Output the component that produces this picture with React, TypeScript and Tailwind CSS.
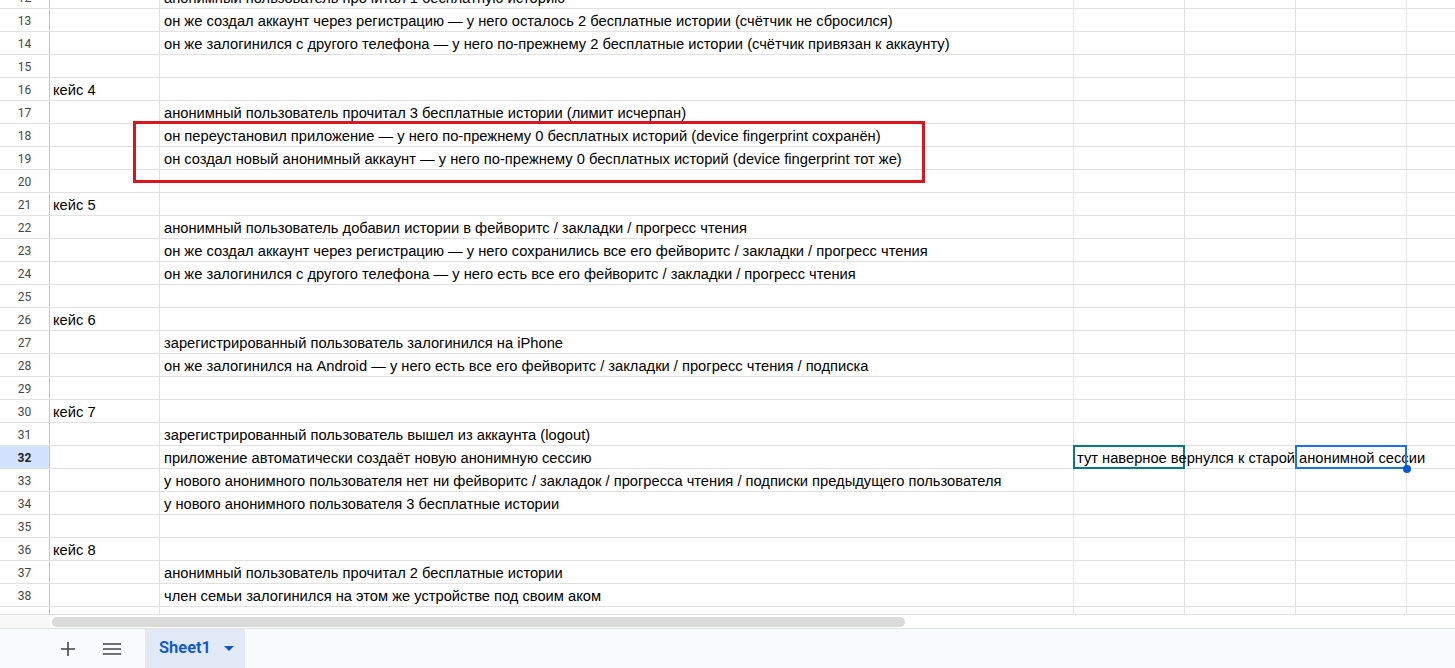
import React from "react";

type Row = { n: number; a?: string; b?: string; c?: string };

const rows: Row[] = [
  { n: 12, b: "анонимный пользователь прочитал 1 бесплатную историю" },
  { n: 13, b: "он же создал аккаунт через регистрацию — у него осталось 2 бесплатные истории (счётчик не сбросился)" },
  { n: 14, b: "он же залогинился с другого телефона — у него по-прежнему 2 бесплатные истории (счётчик привязан к аккаунту)" },
  { n: 15 },
  { n: 16, a: "кейс 4" },
  { n: 17, b: "анонимный пользователь прочитал 3 бесплатные истории (лимит исчерпан)" },
  { n: 18, b: "он переустановил приложение — у него по-прежнему 0 бесплатных историй (device fingerprint сохранён)" },
  { n: 19, b: "он создал новый анонимный аккаунт — у него по-прежнему 0 бесплатных историй (device fingerprint тот же)" },
  { n: 20 },
  { n: 21, a: "кейс 5" },
  { n: 22, b: "анонимный пользователь добавил истории в фейворитс / закладки / прогресс чтения" },
  { n: 23, b: "он же создал аккаунт через регистрацию — у него сохранились все его фейворитс / закладки / прогресс чтения" },
  { n: 24, b: "он же залогинился с другого телефона — у него есть все его фейворитс / закладки / прогресс чтения" },
  { n: 25 },
  { n: 26, a: "кейс 6" },
  { n: 27, b: "зарегистрированный пользователь залогинился на iPhone" },
  { n: 28, b: "он же залогинился на Android — у него есть все его фейворитс / закладки / прогресс чтения / подписка" },
  { n: 29 },
  { n: 30, a: "кейс 7" },
  { n: 31, b: "зарегистрированный пользователь вышел из аккаунта (logout)" },
  { n: 32, b: "приложение автоматически создаёт новую анонимную сессию", c: "тут наверное вернулся к старой анонимной сессии" },
  { n: 33, b: "у нового анонимного пользователя нет ни фейворитс / закладок / прогресса чтения / подписки предыдущего пользователя" },
  { n: 34, b: "у нового анонимного пользователя 3 бесплатные истории" },
  { n: 35 },
  { n: 36, a: "кейс 8" },
  { n: 37, b: "анонимный пользователь прочитал 2 бесплатные истории" },
  { n: 38, b: "член семьи залогинился на этом же устройстве под своим аком" },
  { n: 39, b: "у него по-прежнему 1 Бесплатная история" },
];

const cell = "h-full shrink-0 border-r border-[#e1e1e1] overflow-visible whitespace-nowrap pl-[3px] leading-[24px]";

function SheetRow({ row }: { row: Row }) {
  const active = row.n === 32;
  return (
    <div className="flex h-[23px] border-b border-[#e1e1e1] text-[14.7px] text-[#000]">
      <div
        className={`h-full w-[50px] shrink-0 border-r border-[#c4c7c5] text-center text-[12px] leading-[24px] font-['Roboto',Arial,sans-serif] ${
          active ? "bg-[#d3e3fd] font-bold text-[#1f1f1f]" : "text-[#444746]"
        }`}
      >
        {row.n}
      </div>
      <div className={`${cell} w-[110px]`}>{row.a}</div>
      <div className={`${cell} w-[914px] pl-[4px]`}>{row.b}</div>
      <div className={`${cell} relative w-[111px]`}>
        {row.c && <span className="relative z-10">{row.c}</span>}
        {active && <div className="absolute -left-[1px] -top-[1px] h-[24px] w-[112px] border-2 border-[#0b7a80]" />}
      </div>
      <div className={`${cell} w-[111px]`} />
      <div className={`${cell} relative w-[111px]`}>
        {active && (
          <>
            <div className="absolute -left-[1px] -top-[1px] h-[24px] w-[112px] border-2 border-[#1a73e8] z-20" />
            <div className="absolute -right-[5px] top-[19px] h-[8px] w-[8px] rounded-full bg-[#0b57d0] z-20" />
          </>
        )}
      </div>
      <div className="h-full flex-1" />
    </div>
  );
}

export default function App() {
  return (
    <div className="flex h-[668px] w-[1455px] flex-col overflow-hidden bg-white font-['Liberation_Sans',Arial,sans-serif]">
      <div className="relative h-[614px] shrink-0 overflow-hidden">
        <div className="-mt-[14px]">
          {rows.map((r) => (
            <SheetRow key={r.n} row={r} />
          ))}
        </div>
        <div className="absolute left-[133px] top-[121px] h-[62px] w-[792px] border-[3px] border-[#d8161d]" />
      </div>

      <div className="flex h-[14px] shrink-0 items-center border-t border-[#e1e1e1] bg-white">
        <div className="h-full w-[50px] bg-[#f8f8f8]" />
        <div className="ml-[2px] h-[10px] w-[853px] rounded-[5px] bg-[#dadada]" />
      </div>

      <div className="flex h-[40px] shrink-0 items-center border-t border-[#e1e3e1] bg-[#f9fbfd]">
        <div className="ml-[56px] flex h-[24px] w-[24px] items-center justify-center text-[#444746]">
          <svg width="14" height="14" viewBox="0 0 14 14" fill="none">
            <path d="M7 0v14M0 7h14" stroke="currentColor" strokeWidth="1.6" />
          </svg>
        </div>
        <div className="ml-[20px] flex h-[24px] w-[24px] items-center justify-center text-[#444746]">
          <svg width="18" height="12" viewBox="0 0 18 12" fill="none">
            <path d="M0 1h18M0 6h18M0 11h18" stroke="currentColor" strokeWidth="1.6" />
          </svg>
        </div>
        <div className="ml-[21px] flex h-full w-[100px] items-center bg-[#e1e9f7] pl-[14px] font-['Roboto',Arial,sans-serif] text-[16.5px] font-semibold text-[#0b57d0]">
          Sheet1
          <svg className="ml-[13px]" width="10" height="5" viewBox="0 0 10 5">
            <path d="M0 0h10L5 5z" fill="currentColor" />
          </svg>
        </div>
      </div>
    </div>
  );
}
